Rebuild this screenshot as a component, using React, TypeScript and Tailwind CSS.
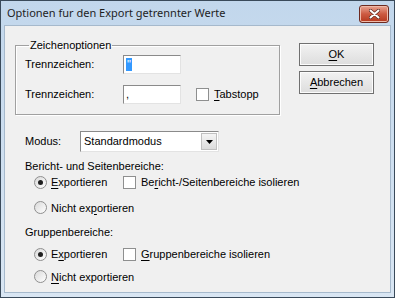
import React from "react";

const font = { fontFamily: "'Liberation Sans', Arial, sans-serif" };

function U({ children }: { children: React.ReactNode }) {
  return <span className="underline underline-offset-[2px]">{children}</span>;
}

function Radio({ checked }: { checked?: boolean }) {
  return (
    <span className="relative inline-flex h-[13px] w-[13px] shrink-0 items-center justify-center rounded-full border border-[#8f8f8f] bg-gradient-to-br from-[#d9d9d9] to-[#ffffff]">
      {checked && <span className="h-[5px] w-[5px] rounded-full bg-[#1f1f1f]" />}
    </span>
  );
}

function Check() {
  return <span className="inline-block h-[13px] w-[13px] shrink-0 border border-[#8e8f8f] bg-white" />;
}

function TextBox({ children }: { children?: React.ReactNode }) {
  return (
    <div className="flex h-[19px] w-[58px] items-center border border-t-[#8a8a8a] border-l-[#8a8a8a] border-b-[#e3e3e3] border-r-[#e3e3e3] bg-white pl-[2px] text-[11px]">
      {children}
    </div>
  );
}

function Button({ children }: { children: React.ReactNode }) {
  return (
    <div className="flex h-[23px] w-[75px] items-center justify-center border border-[#707070] bg-gradient-to-b from-[#f2f2f2] to-[#dddddd] text-[11px] text-black shadow-[inset_0_0_0_1px_#fcfcfc]">
      {children}
    </div>
  );
}

export default function App() {
  return (
    <div
      className="flex h-[298px] w-[395px] flex-col border border-[#3a4a5a] bg-gradient-to-b from-[#c2d7ec] to-[#d9e6f3] text-black"
      style={font}
    >
      <div className="flex h-[24px] items-center justify-between pl-[6px] pr-[5px]">
        <span className="text-[11px] text-[#1e1e1e]" style={{ fontFamily: "'Noto Sans', 'Open Sans', sans-serif" }}>
          Optionen fur den Export getrennter Werte
        </span>
        <div className="mt-[1px] flex h-[18px] w-[30px] items-center justify-center rounded-[3px] border border-[#6d2a20] bg-gradient-to-b from-[#e8a493] via-[#cc5a41] to-[#b5381d] shadow-[inset_0_0_0_1px_#eebaa9]">
          <svg width="11" height="10" viewBox="0 0 11 10">
            <path d="M1.5 1.5 L9.5 8.5 M9.5 1.5 L1.5 8.5" stroke="#5a2a22" strokeWidth="3.4" strokeLinecap="round" />
            <path d="M1.5 1.5 L9.5 8.5 M9.5 1.5 L1.5 8.5" stroke="#ffffff" strokeWidth="2" strokeLinecap="round" />
          </svg>
        </div>
      </div>
      <div className="mx-[3px] mb-[4px] flex-1 border border-[#a6b9cc] bg-[#f0f0f0] text-[11px]">
        <div className="flex pl-[10px] pt-[13px]">
          <fieldset className="h-[76px] w-[265px] border border-[#a0a0a0] pl-[8px] shadow-[1px_1px_0_#ffffff,inset_1px_1px_0_#ffffff]">
            <legend className="ml-[5px] px-[1px] leading-[13px]">Zeichenoptionen</legend>
            <div className="mt-[3px] flex items-center">
              <span className="w-[99px] pl-[1px]">Trennzeichen:</span>
              <TextBox>
                <span className="bg-[#3399ff] px-[1px] leading-[13px] text-white">"</span>
              </TextBox>
            </div>
            <div className="mt-[11px] flex items-center">
              <span className="w-[99px] pl-[1px]">Trennzeichen:</span>
              <TextBox>,</TextBox>
              <span className="ml-[15px] flex items-center gap-[5px]">
                <Check />
                <span>
                  <U>T</U>abstopp
                </span>
              </span>
            </div>
          </fieldset>
          <div className="ml-[19px] mt-[4px] flex flex-col gap-[5px]">
            <Button>
              <U>O</U>K
            </Button>
            <Button>
              <U>A</U>bbrechen
            </Button>
          </div>
        </div>
        <div className="mt-[16px] flex items-center pl-[20px]">
          <span className="w-[55px]">Modus:</span>
          <div className="flex h-[21px] w-[139px] items-center justify-between border border-t-[#8a8a8a] border-l-[#8a8a8a] border-b-[#e3e3e3] border-r-[#e3e3e3] bg-white pl-[3px] pr-[1px]">
            <span>Standardmodus</span>
            <span className="flex h-[17px] w-[16px] items-center justify-center border border-[#c0c0c0] bg-gradient-to-b from-[#f5f5f5] to-[#dcdcdc]">
              <svg width="7" height="4" viewBox="0 0 7 4">
                <path d="M0 0 H7 L3.5 4 Z" fill="#000" />
              </svg>
            </span>
          </div>
        </div>
        <div className="mt-[6px] pl-[20px] leading-[16px]">Bericht- und Seitenbereiche:</div>
        <div className="mt-0 flex items-center pl-[29px]">
          <span className="flex w-[89px] items-center gap-[4px]">
            <Radio checked />
            <span>
              <U>E</U>xportieren
            </span>
          </span>
          <span className="flex items-center gap-[5px]">
            <Check />
            <span>
              Be<U>r</U>icht-/Seitenbereiche isolieren
            </span>
          </span>
        </div>
        <div className="mt-[9px] flex items-center gap-[4px] pl-[29px]">
          <Radio />
          <span>
            Nicht ex<U>p</U>ortieren
          </span>
        </div>
        <div className="mt-[8px] pl-[20px] leading-[16px]">Gruppenbereiche:</div>
        <div className="mt-[6px] flex items-center pl-[29px]">
          <span className="flex w-[89px] items-center gap-[4px]">
            <Radio checked />
            <span>
              E<U>x</U>portieren
            </span>
          </span>
          <span className="flex items-center gap-[5px]">
            <Check />
            <span>
              <U>G</U>ruppenbereiche isolieren
            </span>
          </span>
        </div>
        <div className="mt-[6px] flex items-center gap-[4px] pl-[29px]">
          <Radio />
          <span>
            <U>N</U>icht exportieren
          </span>
        </div>
      </div>
    </div>
  );
}
